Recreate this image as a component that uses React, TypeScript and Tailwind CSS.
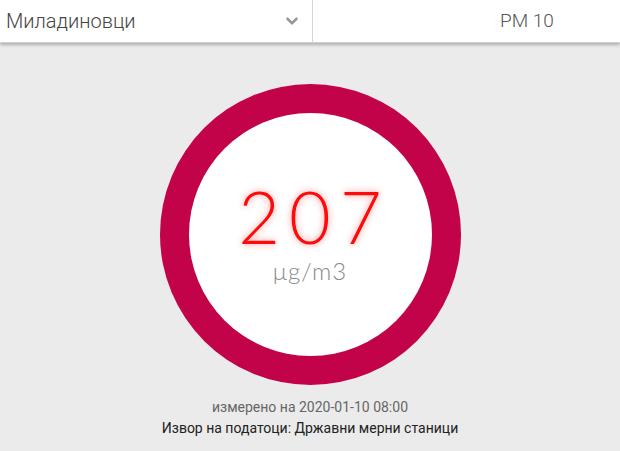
import { ChevronDown } from 'lucide-react';

export default function App() {
  return (
    <div className="w-[620px] h-[451px] bg-[#ebebeb] overflow-hidden" style={{ fontFamily: 'Roboto, "Noto Sans", sans-serif' }}>
      {/* ── Header selectors ── */}
      <div className="flex h-[43px] bg-white shadow-[0_2px_3px_rgba(0,0,0,0.25)] border-b border-[#d0d0d0]">
        <div className="w-[313px] flex items-center justify-between pl-[6px] pr-[11px] border-r border-[#d6d6d6]">
          <span className="text-[20px] text-[#444] font-light">Миладиновци</span>
          <ChevronDown className="w-[18px] h-[18px] text-[#999]" strokeWidth={3.5} />
        </div>
        <div className="flex-1 flex items-center pl-[187px]">
          <span className="text-[19px] text-[#555] font-light">PM 10</span>
        </div>
      </div>

      {/* ── Gauge ── */}
      <div className="flex justify-center pt-[41px]">
        <div className="w-[301px] h-[301px] rounded-full bg-[#c30349] flex items-center justify-center">
          <div className="w-[243px] h-[243px] rounded-full bg-white flex flex-col items-center pt-[74px]">
            <div
              className="text-[72px] leading-[58px] text-[#ff0a0a] font-light tracking-[9px] pl-[9px]"
              style={{ fontFamily: 'Lato, Inter, sans-serif', textShadow: '0 0 7px rgba(255,0,0,0.45)' }}
            >
              207
            </div>
            <div
              className="text-[24px] leading-[24px] text-[#8a8a8a] font-light mt-[14px] tracking-[1px]"
              style={{ fontFamily: 'Lato, Inter, sans-serif' }}
            >
              μg/m3
            </div>
          </div>
        </div>
      </div>

      {/* ── Footer info ── */}
      <div className="flex flex-col items-center mt-[12px] text-[14px] leading-[21px]">
        <span className="text-[#666]">измерено на 2020-01-10 08:00</span>
        <span className="text-[#222]">Извор на податоци: Државни мерни станици</span>
      </div>
    </div>
  );
}
